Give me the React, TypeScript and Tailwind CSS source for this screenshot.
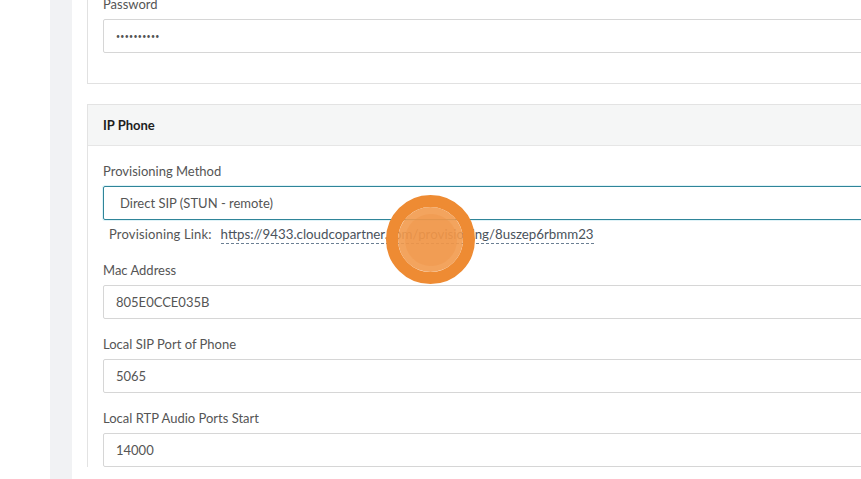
const font = { fontFamily: "Lato, 'Open Sans', Arial, sans-serif" };

type FieldProps = {
  label: string;
  value: string;
  focused?: boolean;
  masked?: boolean;
};

function Field({ label, value, focused, masked }: FieldProps) {
  return (
    <div className="mb-[16px]">
      <div className="h-[18px] leading-[18px] mb-[6px] text-[13px] text-[#555]">
        {label}
      </div>
      <div
        className={`h-[34px] pt-[1px] flex items-center rounded-[2px] bg-white text-[#555] ${
          masked ? "text-[7px] tracking-[0.3px]" : "text-[13px]"
        } ${
          focused
            ? "border border-[#2f8599] pl-[16px] shadow-[0_0_0_1px_#dff3f8]"
            : "border border-[#d6d6d6] pl-[12px]"
        }`}
      >
        {value}
      </div>
    </div>
  );
}

export default function App() {
  return (
    <div
      className="relative w-[861px] h-[479px] overflow-hidden bg-white flex"
      style={font}
    >
      <div className="w-[50px] shrink-0 bg-white" />
      <div className="w-[22px] shrink-0 bg-[#f1f2f4]" />
      <div className="pl-[15px] w-[1000px] shrink-0">
        <div className="border border-[#e1e1e1] border-t-0 px-[15px] pb-[14px] -mt-[5px]">
          <Field label="Password" value="••••••••••" masked />
        </div>

        <div className="mt-[20px] border border-[#e3e3e3] border-b-0">
          <div className="h-[41px] pt-[1px] bg-[#f5f6f6] border-b border-[#e6e6e6] px-[15px] flex items-center text-[13px] font-bold text-[#1e1e1e]">
            IP Phone
          </div>
          <div className="px-[15px] pt-[16px]">
            <Field label="Provisioning Method" value="Direct SIP (STUN - remote)" focused />
            <div className="-mt-[11px] mb-[16px] h-[20px] pl-[6px] flex items-center text-[13px] text-[#555]">
              <span className="tracking-[0.15px]">Provisioning Link:</span>
              <span className="ml-[9px] text-[13.3px] text-[#4a525b] border-b border-dashed border-[#6b7f93] leading-[17px]">
                https://9433.cloudcopartner.com/provisioning/8uszep6rbmm23
              </span>
            </div>
            <Field label="Mac Address" value="805E0CCE035B" />
            <Field label="Local SIP Port of Phone" value="5065" />
            <Field label="Local RTP Audio Ports Start" value="14000" />
          </div>
        </div>
      </div>

      {/* click indicator */}
      <div className="absolute left-[386px] top-[195px] w-[89px] h-[89px] rounded-full border-[12px] border-[#ee8b33] flex items-center justify-center">
        <div className="w-[65px] h-[65px] rounded-full bg-[#f29a4d]/90 flex items-center justify-center">
          <div className="w-[52px] h-[52px] rounded-full bg-[#f08f3e]/30" />
        </div>
      </div>
    </div>
  );
}
